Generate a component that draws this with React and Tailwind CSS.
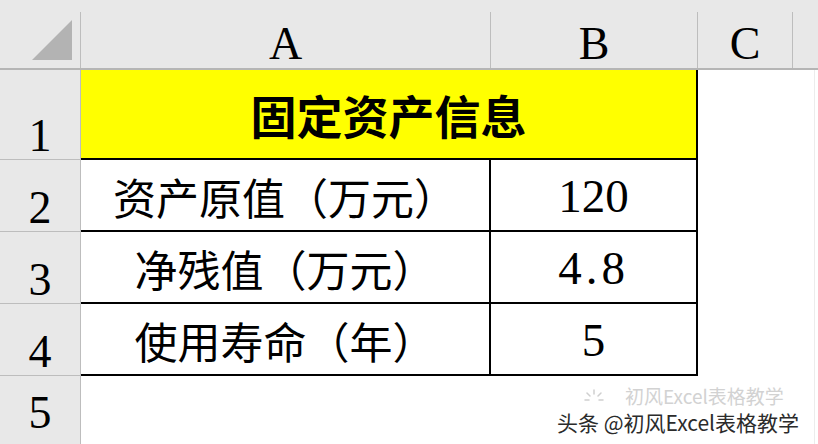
export default function App() {
  const serif = { fontFamily: '"Liberation Serif", "Times New Roman", serif' };
  const cjk = { fontFamily: '"Noto Sans CJK SC", "Noto Sans", sans-serif' };
  const gline = "bg-[#bdbdbd]";

  const HeaderCell = ({ w, label }) => (
    <div className={`flex h-full ${w}`}>
      <div className="flex-1 flex items-end justify-center pb-[1px] text-[46px] leading-none text-black" style={serif}>
        {label}
      </div>
      <div className={`w-px mt-3 ${gline}`} />
    </div>
  );

  const RowHead = ({ n, h }) => (
    <div className={`w-[81px] ${h} flex shrink-0 bg-[#e8e8e8]`}>
      <div className="flex-1 flex flex-col">
        <div className="flex-1 flex items-end justify-center pb-0 text-[46px] leading-none text-black" style={serif}>
          {n}
        </div>
        <div className={`h-px ${gline}`} />
      </div>
      <div className={`w-px ${gline}`} />
    </div>
  );

  const DataRow = ({ n, label, value, tracking = "" }) => (
    <div className="flex h-[72px]">
      <RowHead n={n} h="h-[72px]" />
      <div className="w-[410px] shrink-0 flex items-center justify-center border-r-2 border-b-2 border-black text-[43px] text-black leading-none pt-[2px]" style={cjk}>
        {label}
      </div>
      <div className={`w-[207px] shrink-0 flex items-center justify-center border-r-2 border-b-2 border-black text-[47px] text-black leading-none pt-[2px] ${tracking}`} style={serif}>
        {value}
      </div>
      <div className="flex-1 bg-white" />
    </div>
  );

  return (
    <div className="relative w-[818px] h-[444px] overflow-hidden bg-white">
      {/* column header */}
      <div className="flex h-[70px] bg-[#e8e8e8] border-b-2 border-[#b5b5b5]">
        <div className="flex w-[81px] h-full shrink-0">
          <div className="flex-1 flex items-end justify-end pr-[8px] pb-[8px]">
            <svg width="40" height="40" viewBox="0 0 40 40">
              <polygon points="40,0 40,40 0,40" fill="#b3b3b3" />
            </svg>
          </div>
          <div className={`w-px mt-3 ${gline}`} />
        </div>
        <HeaderCell w="w-[410px] shrink-0" label="A" />
        <HeaderCell w="w-[207px] shrink-0" label="B" />
        <HeaderCell w="w-[95px] shrink-0" label="C" />
        <div className="flex-1" />
      </div>

      {/* row 1 */}
      <div className="flex h-[90px]">
        <RowHead n="1" h="h-[90px]" />
        <div className="w-[617px] shrink-0 flex items-center justify-center bg-[#ffff00] border-r-2 border-b-2 border-black text-[46px] font-bold text-black leading-none" style={cjk}>
          固定资产信息
        </div>
        <div className="flex-1 bg-white" />
      </div>

      <DataRow n="2" label="资产原值（万元）" value="120" />
      <DataRow n="3" label="净残值（万元）" value="4.8" tracking="tracking-[4px]" />
      <DataRow n="4" label="使用寿命（年）" value="5" />

      {/* row 5 */}
      <div className="flex h-[68px]">
        <div className="w-[81px] h-[68px] flex shrink-0 bg-[#e8e8e8]">
          <div className="flex-1 flex items-end justify-center pb-[8px] text-[46px] leading-none text-black" style={serif}>
            5
          </div>
          <div className={`w-px ${gline}`} />
        </div>
        <div className="flex-1 bg-white" />
      </div>

      {/* right edge faint line */}
      <div className="absolute top-[70px] bottom-0 right-[3px] w-px bg-[#ececec]" />

      {/* watermark */}
      <div className="absolute left-[583px] top-[386px] flex items-center gap-[20px] text-[19px] leading-none text-[#d2d2d2]" style={cjk}>
        <svg width="22" height="16" viewBox="0 0 22 16">
          <g stroke="#cfcfcf" strokeWidth="1.5" strokeLinecap="round">
            <line x1="11" y1="2" x2="11" y2="6" />
            <line x1="4" y1="5" x2="7" y2="8" />
            <line x1="18" y1="5" x2="15" y2="8" />
            <line x1="2" y1="12" x2="6" y2="12" />
            <line x1="16" y1="12" x2="20" y2="12" />
          </g>
        </svg>
        <span>初风Excel表格教学</span>
      </div>
      <div
        className="absolute left-[557px] top-[412px] text-[21px] leading-none text-[#2b2b2b] whitespace-nowrap"
        style={{ ...cjk, textShadow: "0 0 2px #fff, 0 0 2px #fff, 1px 1px 0 #fff" }}
      >
        头条 @初风Excel表格教学
      </div>
    </div>
  );
}
